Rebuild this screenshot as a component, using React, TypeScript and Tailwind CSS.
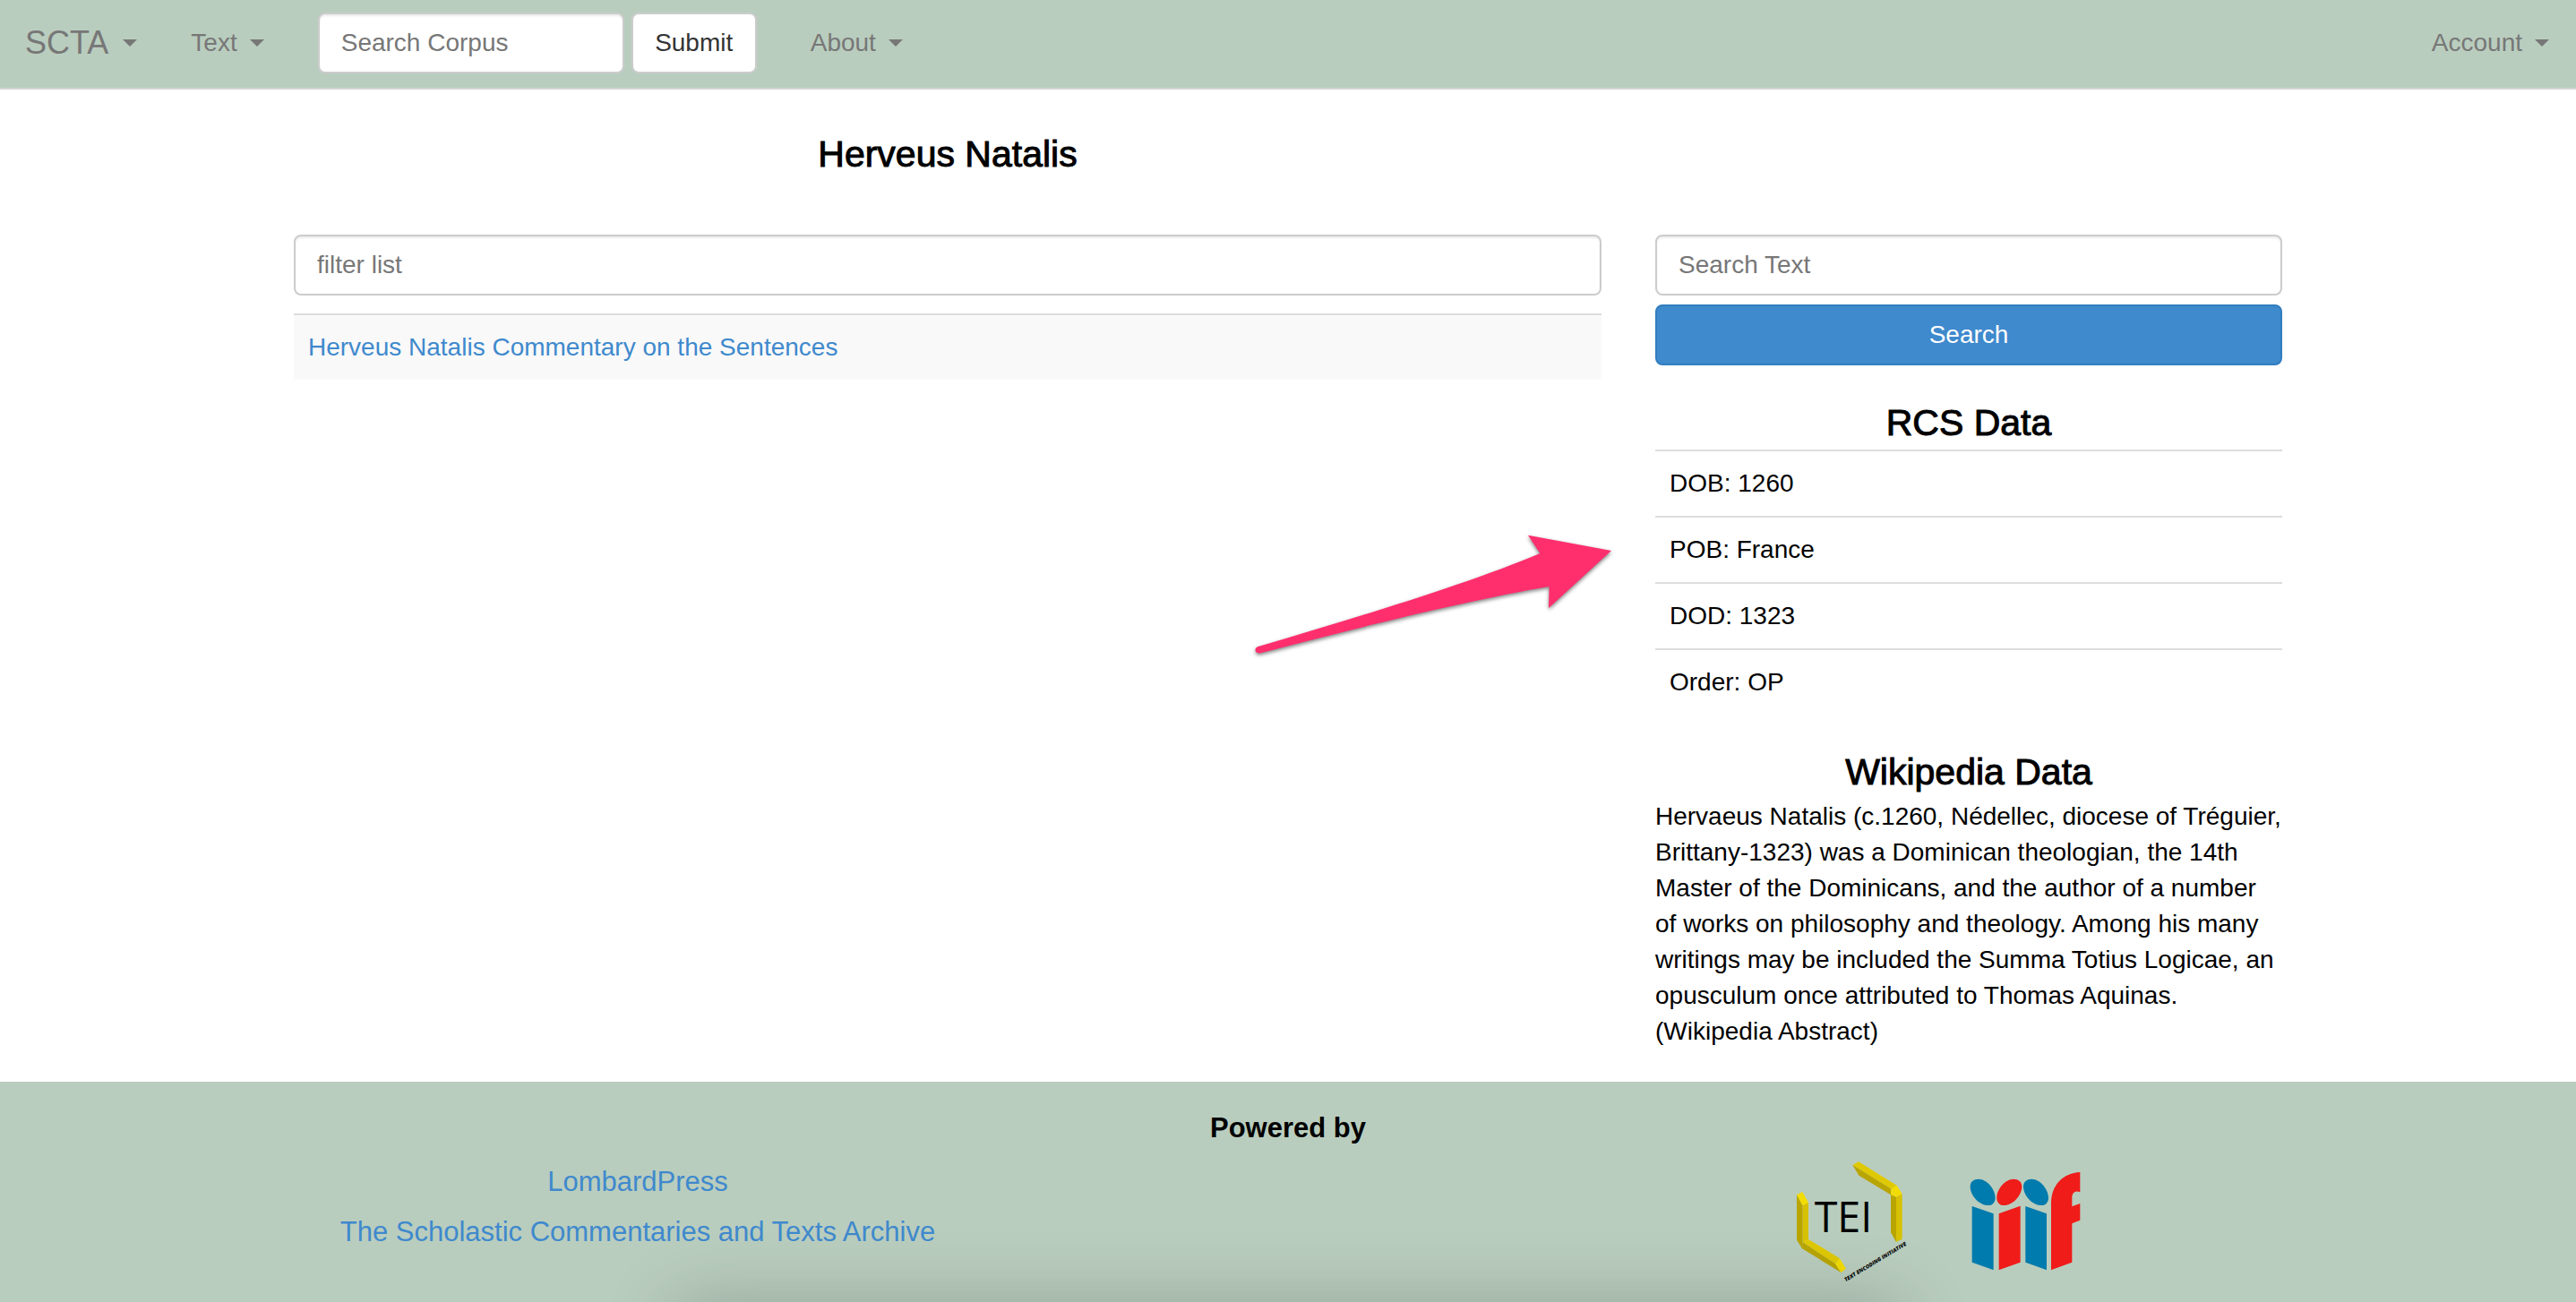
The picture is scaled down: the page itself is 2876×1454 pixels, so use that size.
import type { ReactNode } from "react";

const facts = ["DOB: 1260", "POB: France", "DOD: 1323", "Order: OP"];

const fieldClass =
  "rounded-lg border-2 border-[#cccccc] bg-white px-6 text-[28px] leading-10 text-[#555555] shadow-[inset_0_2px_2px_rgba(0,0,0,0.075)] outline-none placeholder:text-[#777777]";

function Caret() {
  return (
    <svg viewBox="0 0 16 8" className="h-2 w-4" aria-hidden="true">
      <path d="M0 0H16L8 8Z" fill="currentColor" />
    </svg>
  );
}

function NavMenu({ children, brand = false }: { children: ReactNode; brand?: boolean }) {
  return (
    <button
      type="button"
      className={
        brand
          ? "flex items-center gap-4 pr-[30px] pl-7 text-[36px] leading-10"
          : "flex items-center gap-3.5 px-[30px] text-[28px] leading-10"
      }
    >
      {children}
      <Caret />
    </button>
  );
}

function SectionTitle({ children }: { children: ReactNode }) {
  return (
    <h3 className="text-center text-[41px] leading-[44px] [-webkit-text-stroke:1px_black]">
      {children}
    </h3>
  );
}

function Arrow() {
  return (
    <svg
      viewBox="0 0 1320 540"
      className="pointer-events-none absolute top-[146px] -right-8 h-[180px] w-[440px] drop-shadow-[0_2px_2px_rgba(0,0,0,0.5)]"
      aria-hidden="true"
    >
      <path
        d="M75 456C400 360 780 245 1018 144L978 83L1257 135L1047 327L1049 255C780 300 400 395 82 478C60 482 60 458 75 456Z"
        fill="#ff2f6e"
      />
    </svg>
  );
}

function TeiLogo() {
  return (
    <svg
      viewBox="75 48 372 408"
      className="h-[136px] w-[124px] overflow-visible"
      role="img"
      aria-label="TEI"
    >
      <path d="M78 163L98 199V321L96 343L78 314Z" fill="#b8a502" />
      <path d="M98 199L117 189V312L98 322Z" fill="#d6c103" />
      <path d="M78 163L97 153L117 189L98 199Z" fill="#f3dc04" />
      <path d="M98 322L116 311L222 376L207 394Z" fill="#dfc904" />
      <path d="M98 322L207 394L226 423L96 343Z" fill="#b8a502" />
      <path d="M222 376L243 411L226 423L207 394Z" fill="#f3dc04" />
      <path d="M265 63L285 52L413 131L394 143Z" fill="#dfc904" />
      <path d="M265 63L394 143L393 163L286 98Z" fill="#b8a502" />
      <path d="M413 131L431 160L411 171L394 143Z" fill="#f3dc04" />
      <path d="M394 143L411 171L393 163Z" fill="#f3dc04" />
      <path d="M393 162L411 171V321L393 289Z" fill="#b8a502" />
      <path d="M411 171L431 160V311L411 321Z" fill="#d6c103" />
      <text x="137" y="287" fontFamily="'Open Sans', sans-serif" fontSize="140" fill="#000">
        TEI
      </text>
      <text
        transform="translate(242 454) rotate(-31)"
        fontFamily="'Open Sans', sans-serif"
        fontWeight="800"
        fontStyle="italic"
        fontSize="18"
        fill="#000"
      >
        TEXT ENCODING INITIATIVE
      </text>
    </svg>
  );
}

function IiifLogo() {
  return (
    <svg viewBox="659 84 370 330" className="h-[110px] w-[124px]" role="img" aria-label="IIIF">
      <g fill="#007bad">
        <path d="M666 198L738 223V412L666 386Z" />
        <path d="M845 198L916 223V412L845 386Z" />
        <path d="M688 107C715 107 744 140 744 170C744 188 731 197 716 195C686 192 660 160 660 132C660 116 672 107 688 107Z" />
        <path d="M866 107C893 107 922 140 922 170C922 188 909 197 894 195C864 192 838 160 838 132C838 116 850 107 866 107Z" />
      </g>
      <g fill="#ef1c19">
        <path d="M828 197L756 223V412L828 386Z" />
        <path d="M805 107C778 107 749 140 749 170C749 188 762 197 777 195C807 192 833 160 833 132C833 116 821 107 805 107Z" />
        <path d="M1028 84V151C1012 143 1001 153 1001 169V199L1028 189V245L1001 256V386L931 412V190C931 125 972 87 1028 84Z" />
      </g>
    </svg>
  );
}

export default function App() {
  return (
    <div
      className="relative flex min-h-screen flex-col overflow-hidden bg-white text-[28px] leading-10 text-black"
      style={{ fontFamily: "'Liberation Sans', Arial, sans-serif" }}
    >
      <nav className="flex h-[100px] items-stretch border-b-2 border-[#d5d5d5] bg-[#b9cdbe] pb-0.5 text-[#777777]">
        <NavMenu brand>SCTA</NavMenu>
        <NavMenu>Text</NavMenu>
        <form className="flex items-center gap-2 px-[30px]" onSubmit={(e) => e.preventDefault()}>
          <input
            type="text"
            aria-label="Search Corpus"
            placeholder="Search Corpus"
            className={`${fieldClass} h-[68px] w-[342px]`}
          />
          <button
            type="submit"
            className="h-[68px] w-[140px] rounded-lg border-2 border-[#cccccc] bg-white text-[28px] leading-10 text-[#333333]"
          >
            Submit
          </button>
        </form>
        <NavMenu>About</NavMenu>
        <div className="ml-auto flex">
          <NavMenu>Account</NavMenu>
        </div>
      </nav>

      <main className="mx-auto grid w-full max-w-[2280px] grow grid-cols-3 pt-[50px]">
        <section className="relative col-span-2 px-[30px]">
          <SectionTitle>Herveus Natalis</SectionTitle>
          <input
            type="text"
            aria-label="filter list"
            placeholder="filter list"
            className={`${fieldClass} mt-[68px] block h-[68px] w-full`}
          />
          <table className="mt-5 w-full">
            <tbody>
              <tr>
                <td className="border-t-2 border-[#dddddd] bg-[#f9f9f9] p-4">
                  <a href="#commentary" className="text-[#3f89cd]">
                    Herveus Natalis Commentary on the Sentences
                  </a>
                </td>
              </tr>
            </tbody>
          </table>
          <div className="relative">
            <Arrow />
          </div>
        </section>

        <aside className="px-[30px] pt-28 pb-9">
          <form onSubmit={(e) => e.preventDefault()}>
            <input
              type="text"
              aria-label="Search Text"
              placeholder="Search Text"
              className={`${fieldClass} block h-[68px] w-full`}
            />
            <button
              type="submit"
              className="mt-2.5 mb-[42px] block h-[68px] w-full rounded-lg border-2 border-[#327dbf] bg-[#3f89cd] leading-10 text-white"
            >
              Search
            </button>
          </form>
          <SectionTitle>RCS Data</SectionTitle>
          <table className="mt-2 mb-[42px] w-full">
            <tbody>
              {facts.map((fact) => (
                <tr key={fact}>
                  <td className="border-t-2 border-[#dddddd] p-4">{fact}</td>
                </tr>
              ))}
            </tbody>
          </table>
          <SectionTitle>Wikipedia Data</SectionTitle>
          <p className="mt-2">
            Hervaeus Natalis (c.1260, Nédellec, diocese of Tréguier, Brittany-1323) was a Dominican
            theologian, the 14th Master of the Dominicans, and the author of a number of works on
            philosophy and theology. Among his many writings may be included the Summa Totius
            Logicae, an opusculum once attributed to Thomas Aquinas. (Wikipedia Abstract)
          </p>
        </aside>
      </main>

      <footer className="bg-[#b9cdbe] pt-8 pb-[22px] text-[31px]">
        <h4 className="text-center font-bold">Powered by</h4>
        <div className="mx-auto grid w-full max-w-[2178px] grid-cols-3">
          <div className="flex flex-col items-center gap-4 pt-5">
            <a href="#lombardpress" className="text-[#3f89cd]">
              LombardPress
            </a>
            <a href="#scta" className="whitespace-nowrap text-[#3f89cd]">
              The Scholastic Commentaries and Texts Archive
            </a>
          </div>
          <div className="col-start-3 flex items-center justify-center gap-[70px] pt-4">
            <TeiLogo />
            <IiifLogo />
          </div>
        </div>
      </footer>
      <div className="pointer-events-none absolute top-full left-1/2 h-20 w-[1376px] -translate-x-1/2 rounded-lg shadow-[0_0_80px_rgba(0,0,0,0.2)]" />
    </div>
  );
}
